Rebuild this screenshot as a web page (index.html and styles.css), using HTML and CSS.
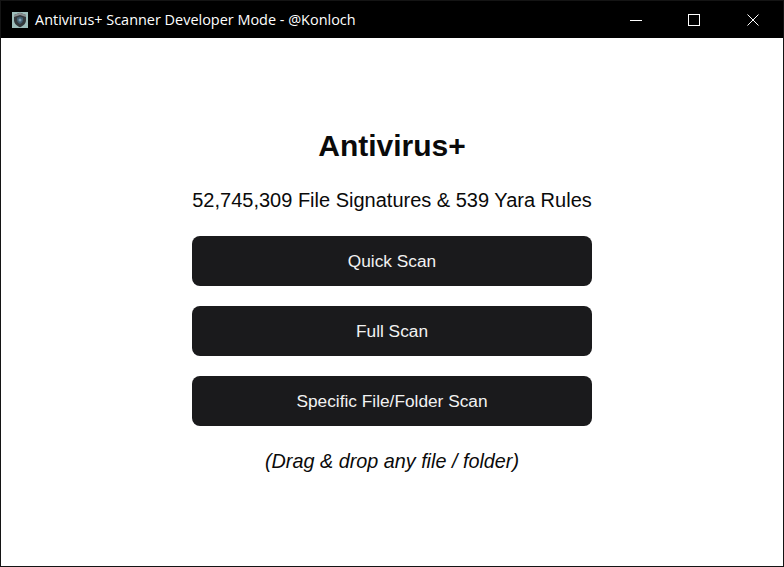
FILE: index.html
```html
<!DOCTYPE html>
<html lang="en">
<head>
<meta charset="utf-8">
<title>Antivirus+ Scanner Developer Mode - @Konloch</title>
<link rel="stylesheet" href="styles.css">
</head>
<body>
<div class="window">
  <header class="titlebar">
    <svg class="app-icon" viewBox="0 0 16 16" width="16" height="16" aria-hidden="true">
      <rect width="16" height="16" fill="#9dbdba"/>
      <path d="M8 .8 14 3V8c0 3.600-2.700 6-6 7.200C4.700 14 2 11.600 2 8V3Z" fill="#33383b"/>
      <path d="M8 .8 14 3V5L8 3 2 5V3Z" fill="#8a8f92"/>
      <path d="M8 4.500 11 5.800V8c0 2-1.300 3.300-3 4-1.700-.7-3-2-3-4V5.800Z" fill="#3f5c6e"/>
      <circle cx="8" cy="8" r="1.500" fill="#7f9fb2"/>
    </svg>
    <span class="window-title">Antivirus+ Scanner Developer Mode - @Konloch</span>
    <div class="controls">
      <div class="control">
        <svg width="12" height="12" viewBox="0 0 12 12" aria-hidden="true"><path d="M0 6.500H12" stroke="#fff" fill="none"/></svg>
      </div>
      <div class="control">
        <svg width="12" height="12" viewBox="0 0 12 12" aria-hidden="true"><rect x=".5" y=".5" width="11" height="11" stroke="#fff" fill="none"/></svg>
      </div>
      <div class="control control-close">
        <svg width="12" height="12" viewBox="0 0 12 12" aria-hidden="true"><path d="M.5.500 11.500 11.500M11.500.500.500 11.500" stroke="#fff" fill="none"/></svg>
      </div>
    </div>
  </header>
  <main class="content">
    <h1 class="heading">Antivirus+</h1>
    <p class="stats">52,745,309 File Signatures &amp; 539 Yara Rules</p>
    <div class="actions">
      <button class="scan-button" type="button">Quick Scan</button>
      <button class="scan-button" type="button">Full Scan</button>
      <button class="scan-button" type="button">Specific File/Folder Scan</button>
    </div>
    <p class="hint">(Drag &amp; drop any file / folder)</p>
  </main>
</div>
</body>
</html>
```

FILE: styles.css
```css
html, body {
  margin: 0;
  padding: 0;
  background: #fff;
}

.window {
  box-sizing: border-box;
  width: 784px;
  height: 567px;
  border: 1px solid #141414;
  display: flex;
  flex-direction: column;
  overflow: hidden;
}

.titlebar {
  flex: 0 0 37px;
  background: #000;
  color: #fff;
  display: flex;
  align-items: center;
  padding-left: 11px;
  font-family: "Open Sans", "Noto Sans", sans-serif;
  font-size: 14.45px;
}

.app-icon {
  flex: none;
  margin-right: 7px;
}

.window-title {
  flex: 1;
  white-space: nowrap;
}

.controls {
  display: flex;
  align-self: stretch;
}

.control {
  width: 58px;
  display: flex;
  align-items: center;
  justify-content: center;
}

.control-close {
  width: 60px;
}

.content {
  flex: 1;
  display: flex;
  flex-direction: column;
  align-items: center;
  font-family: "Liberation Sans", Arial, sans-serif;
  color: #0a0a0a;
  padding-top: 91px;
}

.heading {
  margin: 0;
  font-size: 30px;
  line-height: 34px;
  font-weight: 700;
}

.stats {
  margin: 26px 0 0;
  font-size: 20px;
  line-height: 23px;
}

.actions {
  margin-top: 24px;
  display: flex;
  flex-direction: column;
  gap: 20px;
  width: 400px;
}

.scan-button {
  box-sizing: border-box;
  height: 50px;
  border: 0;
  border-radius: 8px;
  background: #1a1a1c;
  color: #f2f2f2;
  font-family: inherit;
  font-size: 17.3px;
  padding: 1px 0 0;
}

.hint {
  margin: 24px 0 0;
  font-size: 19.8px;
  line-height: 23px;
  font-style: italic;
}
```
